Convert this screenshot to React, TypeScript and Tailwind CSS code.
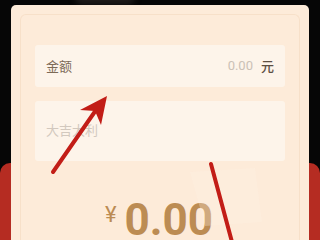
import React from "react";

const App = () => {
  return (
    <div className="relative w-[320px] h-[240px] overflow-hidden bg-[#060606] font-['Noto_Sans_CJK_SC',sans-serif]">
      <div className="absolute left-[75px] top-[-10px] w-[60px] h-[15px] rounded-full bg-[#1e1b1a] blur-[3px]" />
      <div className="absolute left-0 right-0 top-[163px] bottom-0 rounded-t-[10px] bg-[#b52c22]" />
      <div className="relative mx-[11px] mt-[5px] h-[235px] rounded-t-[5px] bg-[#fdebd9] px-[9px] pt-[9px]">
        <div className="h-full rounded-t-[6px] border border-b-0 border-[#f7e0c9] px-[14px] pt-[30px]">
          <div className="flex h-[42px] items-center justify-between rounded-[3px] bg-[#fdf4ea] px-[11px]">
            <span className="text-[13px] text-[#7c6a57]">金额</span>
            <div className="flex items-center gap-[8px]">
              <span className="font-['Roboto'] text-[13px] text-[#cbc1b6]">0.00</span>
              <span className="text-[13px] font-medium text-[#5c4f42]">元</span>
            </div>
          </div>
          <div className="mt-[14px] h-[60px] rounded-[3px] bg-[#fdf4ea] px-[11px] pt-[15px]">
            <span className="text-[13px] text-[#d2c8be]">大吉大利</span>
          </div>
          <div className="mt-[37px] flex items-start justify-center gap-[8px] pr-[2px]">
            <span className="mt-[6px] font-['Roboto'] text-[22px] leading-none text-[#bc8c53]">¥</span>
            <span className="font-['Roboto'] text-[44px] font-bold leading-none text-[#bc8c53]">0.00</span>
          </div>
        </div>
      </div>
      <svg className="absolute inset-0" width="320" height="240" viewBox="0 0 320 240">
        <polygon points="190,172 255,168 262,222 205,226" fill="#fff3e6" opacity="0.3" />
        <line x1="53" y1="172" x2="96" y2="110" stroke="#c21d17" strokeWidth="4" strokeLinecap="round" />
        <polygon points="107,96 80,110 95,111 101,125" fill="#c21d17" />
        <line x1="211" y1="164" x2="232" y2="242" stroke="#c21d17" strokeWidth="4" strokeLinecap="round" />
      </svg>
    </div>
  );
};

export default App;
